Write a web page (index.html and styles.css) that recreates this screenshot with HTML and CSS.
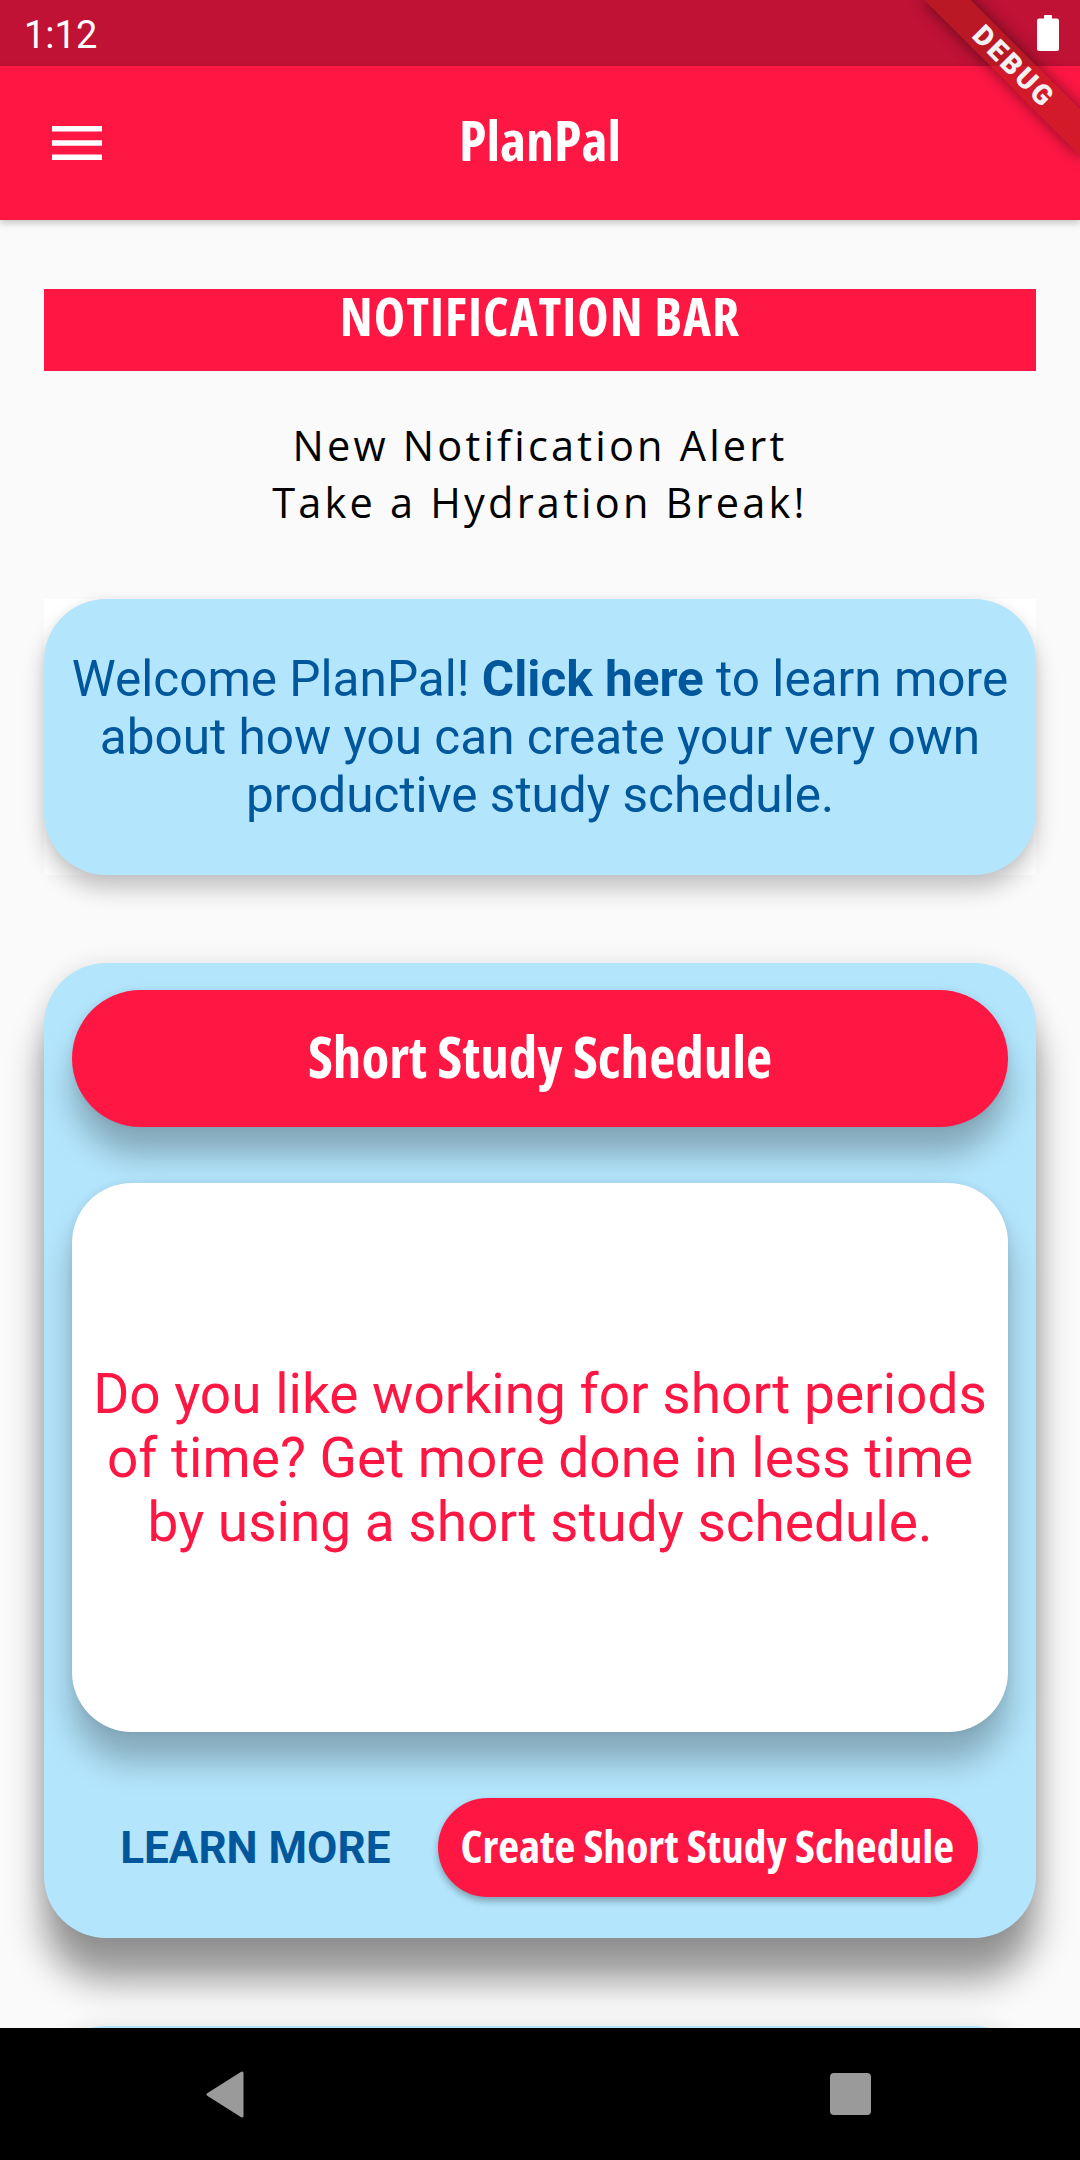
FILE: index.html
```html
<!DOCTYPE html>
<html lang="en">
<head>
<meta charset="utf-8">
<title>PlanPal</title>
<link rel="stylesheet" href="styles.css">
</head>
<body>
<div class="screen">
  <div class="status-bar">
    <span class="time">1:12</span>
    <svg class="battery" width="22" height="36" viewBox="0 0 22 36"><rect x="7" y="0" width="8" height="5" rx="1" fill="#fff"/><rect x="0" y="3.5" width="22" height="32.5" rx="2" fill="#fff"/></svg>
  </div>
  <header class="app-bar">
    <div class="menu">
      <svg width="50" height="34" viewBox="0 0 50 34"><rect x="0" y="0" width="50" height="5.5" fill="#fff"/><rect x="0" y="14.25" width="50" height="5.5" fill="#fff"/><rect x="0" y="28.5" width="50" height="5.5" fill="#fff"/></svg>
    </div>
    <h1 class="title">PlanPal</h1>
    <div></div>
  </header>
  <main class="content">
    <div class="notif-bar">NOTIFICATION BAR</div>
    <div class="notif-text">
      <p>New Notification Alert</p>
      <p>Take a Hydration Break!</p>
    </div>
    <div class="welcome-wrap">
      <div class="welcome-card">
        <p>Welcome PlanPal! <b>Click here</b> to learn more about how you can create your very own productive study schedule.</p>
      </div>
    </div>
    <section class="schedule-card">
      <div class="schedule-title">Short Study Schedule</div>
      <div class="schedule-desc">
        <p>Do you like working for short periods of time? Get more done in less time by using a short study schedule.</p>
      </div>
      <div class="actions">
        <span class="learn-more">LEARN MORE</span>
        <span class="create-btn">Create Short Study Schedule</span>
      </div>
    </section>
    <section class="schedule-card next-card"></section>
  </main>
  <nav class="nav-bar">
    <svg class="nav-back" width="40" height="47" viewBox="0 0 40 47"><polygon points="37,2 37,45 3,23.5" fill="#9a9a9a" stroke="#9a9a9a" stroke-width="3" stroke-linejoin="round"/></svg>
    <span class="nav-recent"></span>
  </nav>
  <div class="debug-banner">DEBUG</div>
</div>
</body>
</html>
```
FILE: styles.css
```css
* { box-sizing: border-box; }
html, body { margin: 0; padding: 0; }
body { background: #fafafa; font-family: Roboto, "Noto Sans", sans-serif; }

.screen {
  position: relative;
  width: 1080px;
  height: 2160px;
  overflow: hidden;
  display: flex;
  flex-direction: column;
  background: #fafafa;
}

.status-bar {
  height: 66px;
  flex: none;
  background: #bf1235;
  display: flex;
  align-items: center;
  padding: 4px 21px 0 24px;
}
.time {
  color: #fff;
  font-family: Roboto, sans-serif;
  font-size: 38px;
  line-height: 44px;
}
.battery { margin-left: auto; margin-top: -4px; }

.app-bar {
  position: relative;
  z-index: 2;
  height: 154px;
  flex: none;
  background: #ff1744;
  display: grid;
  grid-template-columns: 1fr auto 1fr;
  align-items: center;
  box-shadow: 0 3px 7px rgba(0,0,0,0.22);
}
.menu { display: flex; align-items: center; padding-left: 52px; }
.menu svg { display: block; }
.title {
  margin: 0;
  color: #fff;
  font-family: "Open Sans", sans-serif;
  font-stretch: 75%;
  font-weight: bold;
  font-size: 56px;
  line-height: 60px;
  padding-bottom: 8px;
}

.content {
  flex: 1;
  overflow: hidden;
  padding-top: 69px;
}

.notif-bar {
  margin: 0 44px;
  height: 82px;
  background: #ff1744;
  color: #fff;
  text-align: center;
  font-family: "Open Sans", sans-serif;
  font-stretch: 75%;
  font-weight: bold;
  font-size: 53px;
  line-height: 52px;
  letter-spacing: 1px;
  padding-top: 1px;
}

.notif-text {
  margin-top: 46px;
  text-align: center;
  color: #000;
  font-family: "Open Sans", sans-serif;
  font-size: 41.5px;
  line-height: 57px;
  letter-spacing: 3.2px;
}
.notif-text p { margin: 0; }

.welcome-wrap {
  margin: 68px 44px 0;
  height: 276px;
  background: #fff;
}
.welcome-card {
  height: 100%;
  background: #b3e5fc;
  border-radius: 62px;
  box-shadow: 0 14px 22px rgba(0,0,0,0.22), 0 0 10px rgba(0,0,0,0.06);
  display: flex;
  align-items: center;
  justify-content: center;
  padding: 0 18px;
}
.welcome-card p {
  margin: 0;
  text-align: center;
  color: #01579b;
  font-family: Roboto, sans-serif;
  font-size: 49.5px;
  line-height: 58px;
}
.welcome-card b { font-weight: bold; }

.schedule-card {
  margin: 88px 44px 0;
  background: #b3e5fc;
  border-radius: 62px;
  padding: 27px 28px 41px;
  box-shadow: 0 42px 36px rgba(0,0,0,0.4), 0 0 22px rgba(0,0,0,0.1);
}
.schedule-title {
  height: 137px;
  border-radius: 68.5px;
  background: #ff1744;
  color: #fff;
  display: flex;
  align-items: center;
  justify-content: center;
  padding-bottom: 5px;
  font-family: "Open Sans", sans-serif;
  font-stretch: 75%;
  font-weight: bold;
  font-size: 57px;
  line-height: 60px;
  box-shadow: 0 28px 30px rgba(0,0,0,0.26), 0 0 10px rgba(0,0,0,0.08);
}
.schedule-desc {
  margin-top: 56px;
  height: 549px;
  background: #fff;
  border-radius: 60px;
  display: flex;
  align-items: center;
  justify-content: center;
  padding: 0 10px;
  box-shadow: 0 30px 32px rgba(0,0,0,0.26), 0 0 10px rgba(0,0,0,0.08);
}
.schedule-desc p {
  margin: 0;
  text-align: center;
  color: #ff1744;
  font-family: Roboto, sans-serif;
  font-size: 55px;
  line-height: 64px;
}
.actions {
  margin-top: 66px;
  height: 99px;
  display: flex;
  align-items: center;
  justify-content: flex-end;
  padding-right: 30px;
  white-space: nowrap;
}
.learn-more {
  color: #01579b;
  font-family: Roboto, sans-serif;
  font-weight: bold;
  font-size: 44px;
  margin-right: 48px;
}
.create-btn {
  height: 99px;
  border-radius: 49.5px;
  background: #ff1744;
  color: #fff;
  display: flex;
  align-items: center;
  padding: 0 24px 6px 22px;
  font-family: "Open Sans", sans-serif;
  font-stretch: 75%;
  font-weight: bold;
  font-size: 45.5px;
  box-shadow: 0 4px 7px rgba(0,0,0,0.3);
}
.next-card { height: 400px; padding: 0; }

.nav-bar {
  height: 132px;
  flex: none;
  background: #000;
  display: flex;
  align-items: center;
  padding-left: 205px;
  position: relative;
  z-index: 3;
}
.nav-back { display: block; }
.nav-recent {
  display: block;
  width: 41px;
  height: 42px;
  border-radius: 4px;
  background: #9a9a9a;
  margin-left: 585px;
}

.debug-banner {
  position: absolute;
  z-index: 10;
  left: 904px;
  top: 49.5px;
  width: 220px;
  height: 33px;
  transform: rotate(45deg);
  background: rgba(183,28,28,0.63);
  box-shadow: 0 0 16px rgba(0,0,0,0.5);
  color: #f2f2f2;
  text-align: center;
  font-family: Roboto, sans-serif;
  font-weight: 900;
  font-size: 28px;
  line-height: 33px;
  letter-spacing: 2.75px;
}
```
